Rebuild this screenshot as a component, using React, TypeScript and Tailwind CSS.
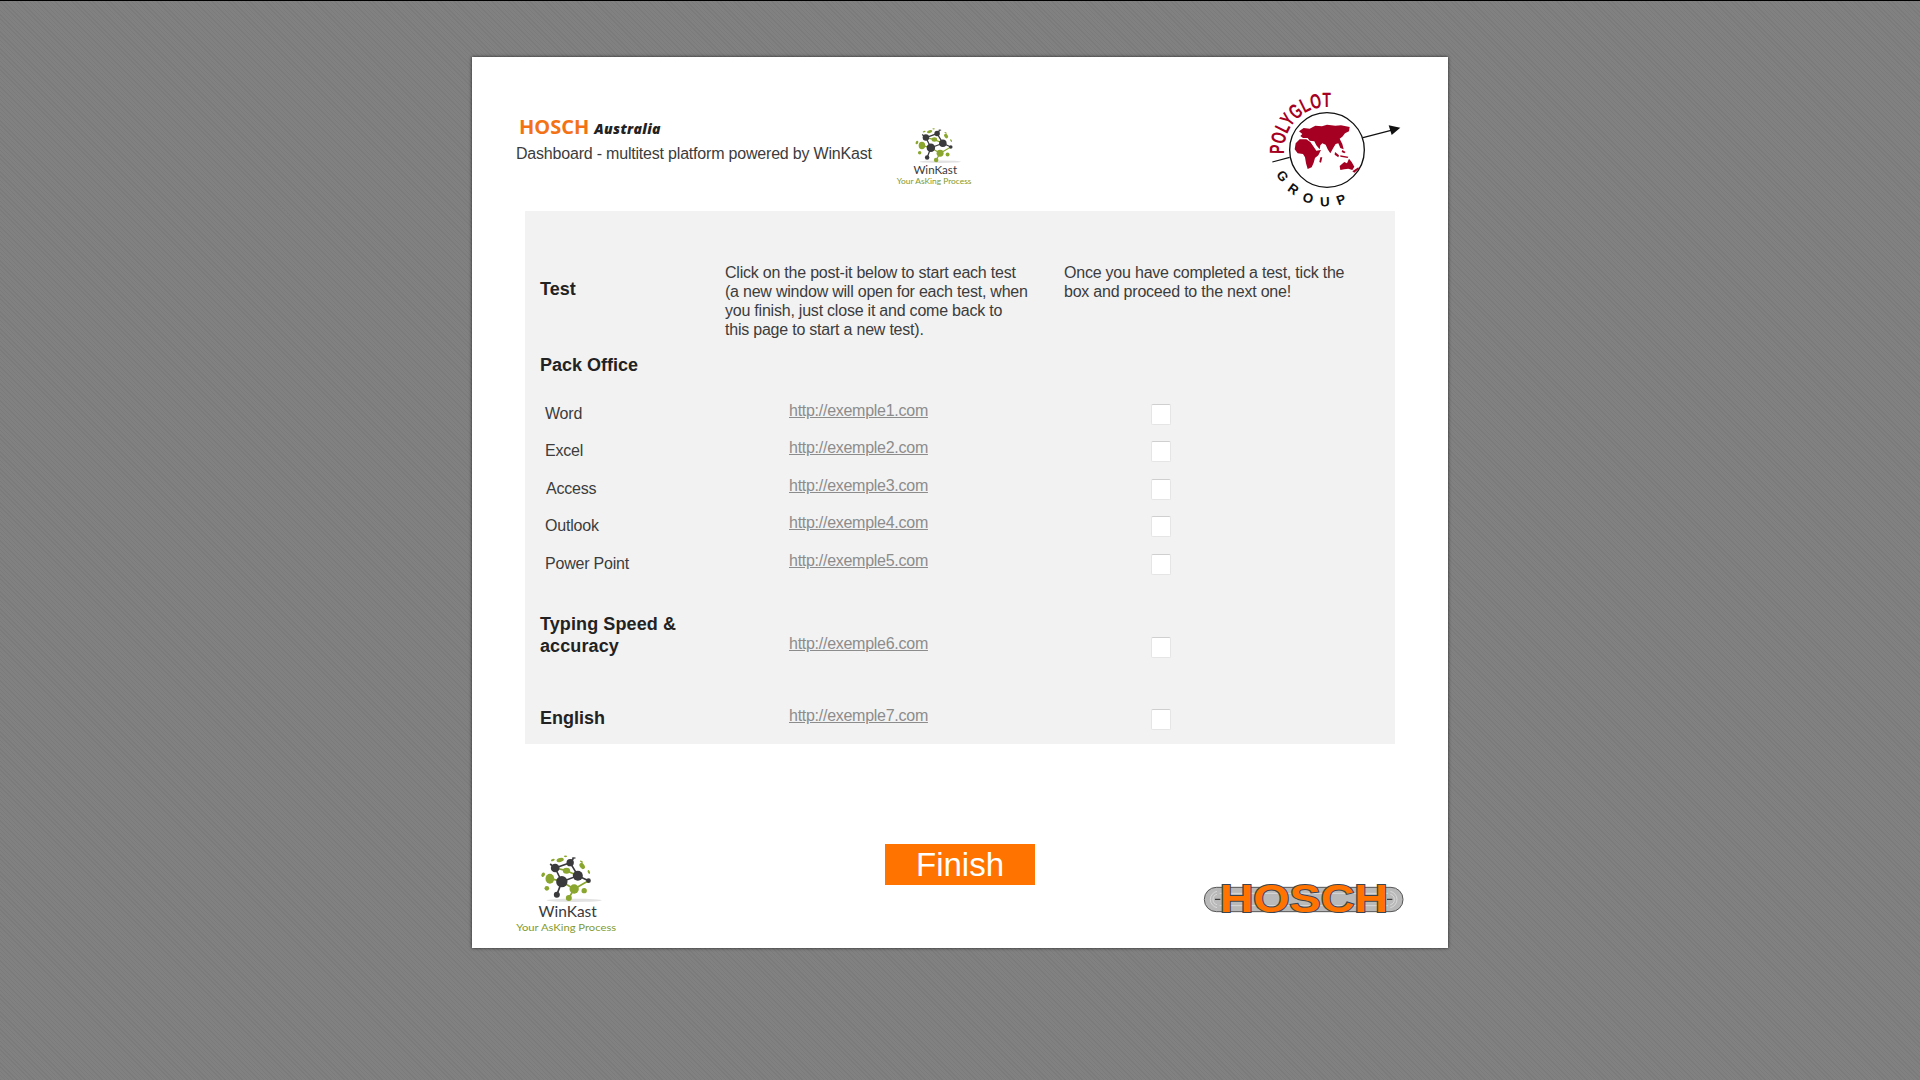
const ARIAL = 'font-["Liberation_Sans",Arial,sans-serif]';

const packOffice = [
  { name: 'Word', url: 'http://exemple1.com', indent: 'pl-[5px]' },
  { name: 'Excel', url: 'http://exemple2.com', indent: 'pl-[5px]' },
  { name: 'Access', url: 'http://exemple3.com', indent: 'pl-[6px]' },
  { name: 'Outlook', url: 'http://exemple4.com', indent: 'pl-[5px]' },
  { name: 'Power Point', url: 'http://exemple5.com', indent: 'pl-[5px]' },
];

function WinKastLogo({ className }: { className: string }) {
  return (
    <svg viewBox="45 70 305 240" className={className}>
      <ellipse cx="222" cy="209" rx="83" ry="5" fill="#e2e2e2" />
      <g stroke="#8aa62f" strokeWidth="5" fill="none">
        <path d="M150 143 L185 153 M199 120 L233 135 M222 175 L185 153 M222 175 L265 150 M206 202 L222 175 M199 120 L165 112" />
      </g>
      <g stroke="#3a3a3c" strokeWidth="5" fill="none">
        <path d="M185 153 L233 135 L210 96 L165 112 L185 153 L170 192 M233 135 L265 150 M210 96 L220 83 M165 112 L150 100" />
      </g>
      <g fill="#8aa62f">
        <ellipse cx="149" cy="144" rx="13" ry="15" />
        <ellipse cx="199" cy="120" rx="11" ry="9" />
        <circle cx="222" cy="175" r="14" />
        <circle cx="140" cy="173" r="7" />
        <circle cx="252" cy="180" r="8" />
        <circle cx="206" cy="202" r="9" />
        <ellipse cx="180" cy="88" rx="11" ry="6" transform="rotate(-15 180 88)" />
        <ellipse cx="129" cy="132" rx="5" ry="7" transform="rotate(30 129 132)" />
        <ellipse cx="246" cy="106" rx="7" ry="10" transform="rotate(-35 246 106)" />
        <ellipse cx="266" cy="124" rx="3" ry="6" transform="rotate(-25 266 124)" />
        <ellipse cx="158" cy="88" rx="6" ry="3" transform="rotate(-20 158 88)" />
        <ellipse cx="196" cy="77" rx="5" ry="2.5" />
        <ellipse cx="244" cy="93" rx="5" ry="2.5" transform="rotate(30 244 93)" />
      </g>
      <g fill="#3a3a3c">
        <circle cx="185" cy="153" r="17" />
        <circle cx="233" cy="135" r="15" />
        <circle cx="165" cy="112" r="13" />
        <circle cx="210" cy="96" r="11" />
        <circle cx="170" cy="192" r="9" />
        <circle cx="265" cy="150" r="7" />
        <ellipse cx="221" cy="82" rx="6" ry="2.5" />
      </g>
      <text x="115" y="260" textLength="175" lengthAdjust="spacingAndGlyphs" fontFamily="Lato, sans-serif" fontSize="44" fill="#3a3a3c">
        WinKast
      </text>
      <text x="48" y="300" textLength="300" lengthAdjust="spacingAndGlyphs" fontFamily="Lato, sans-serif" fontSize="30" fill="#7f9a2d">
        Your AsKing Process
      </text>
    </svg>
  );
}

function PolyglotLogo() {
  return (
    <svg viewBox="140 60 410 350" className="h-[116.67px] w-[136.67px] overflow-visible">
      <defs>
        <path id="polyglot-arc" d="M192 252 A129 129 0 0 1 352 115" />
        <path id="group-arc" d="M168 312 A168 168 0 0 0 400 388" />
      </defs>
      <path d="M156 276 L208 262 M428 203 L512 181" stroke="#111" strokeWidth="3.5" />
      <path d="M540 173 L505 166 L514 195 Z" fill="#111" />
      <circle cx="320" cy="240" r="112" fill="#fff" stroke="#111" strokeWidth="4" />
      <g fill="#a50021">
        <path d="M236 184 L250 174 L268 176 L285 167 L305 169 L320 164 L345 167 L362 166 L388 171 L386 184 L374 190 L366 200 L358 206 L366 222 L370 238 L360 234 L354 220 L346 222 L340 232 L330 250 L322 238 L316 224 L306 220 L300 226 L298 238 L288 226 L282 214 L268 212 L262 204 L248 204 L240 198 L246 192 Z" />
        <path d="M226 220 L238 208 L258 208 L270 216 L280 230 L288 242 L302 240 L294 256 L284 264 L280 278 L274 292 L262 297 L257 280 L254 262 L248 252 L232 250 L223 238 Z" />
        <path d="M358 288 L372 276 L380 280 L386 266 L394 276 L402 290 L396 300 L384 296 L372 298 L360 300 Z" />
        <path d="M300 262 L306 262 L302 278 L297 276 Z" />
        <path d="M344 246 L356 256 L354 262 L343 254 Z" />
        <path d="M360 256 L384 260 L382 264 L360 260 Z" />
        <path d="M366 240 L376 246 L372 250 L364 246 Z" />
        <path d="M396 304 L414 292 L416 296 L402 308 Z" />
      </g>
      <text fontFamily="Liberation Sans, sans-serif" fontWeight="700" fontSize="62" fill="#a50021">
        <textPath href="#polyglot-arc" textLength="226" lengthAdjust="spacingAndGlyphs">
          POLYGLOT
        </textPath>
      </text>
      <text fontFamily="Liberation Sans, sans-serif" fontWeight="700" fontSize="40" fill="#111">
        <textPath href="#group-arc" letterSpacing="26">
          GROUP
        </textPath>
      </text>
    </svg>
  );
}

function HoschLogo() {
  return (
    <svg viewBox="70 72 604 90" className="h-[30px] w-[201.33px] overflow-visible">
      <rect x="74" y="82" width="596" height="73" rx="36" fill="#b9b9b9" stroke="#555" strokeWidth="3" />
      <g fill="none" stroke="#e8e8e8" strokeWidth="2">
        <path d="M112 94 A25 25 0 0 0 112 143 M112 103 A16 16 0 0 0 112 134" />
        <path d="M632 94 A25 25 0 0 1 632 143 M632 103 A16 16 0 0 1 632 134" />
        <path d="M120 100 H625 M120 137 H625" />
      </g>
      <path d="M106 118 H122 M622 118 H638" stroke="#222" strokeWidth="3" />
      <text
        x="120"
        y="157"
        textLength="505"
        lengthAdjust="spacingAndGlyphs"
        fontFamily="Liberation Sans, sans-serif"
        fontWeight="700"
        fontSize="115"
        fill="#ff7300"
        stroke="#3c4650"
        strokeWidth="6"
        paintOrder="stroke"
      >
        HOSCH
      </text>
    </svg>
  );
}

function TickBox() {
  return (
    <input
      type="checkbox"
      className="block h-[21px] w-[20px] appearance-none rounded-[2px] border border-[#e5e5e5] border-t-[#cfcfcf] bg-white"
    />
  );
}

function TestLink({ url }: { url: string }) {
  return (
    <a href="#" className="text-[16px] leading-[18px] tracking-[-0.27px] text-[#8c8c8c] underline">
      {url}
    </a>
  );
}

export default function App() {
  return (
    <div className={`min-h-[1080px] border-t border-black bg-[#7f7f7f] bg-[repeating-linear-gradient(45deg,#7b7b7b_0_1px,#818181_1px_3px)] pt-[56px] ${ARIAL}`}>
      <div className="mx-auto flex h-[891px] w-[976px] flex-col bg-white shadow-[0_0_3px_#222222]">
        <header className="flex h-[154px] shrink-0 items-start pl-[44px] pr-[44px]">
          <div className="w-[380px] pt-[60px]">
            <div className="flex items-baseline gap-[5px] pl-[3px] font-['Open_Sans',sans-serif] leading-[20px]">
              <span className="text-[20px] font-bold text-[#f47216]">HOSCH</span>
              <span className="text-[14px] font-extrabold italic tracking-[0.3px] text-[#222222]">Australia</span>
            </div>
            <p className="mt-[5px] text-[16px] leading-[19px] tracking-[-0.2px] text-[#3c3c3c]">Dashboard - multitest platform powered by WinKast</p>
          </div>
          <WinKastLogo className="mt-[70px] h-[60px] w-[76px]" />
          <div className="ml-auto mt-[33px]">
            <PolyglotLogo />
          </div>
        </header>

        <section className="mx-[53px] h-[533px] shrink-0 bg-[#f2f2f2] pl-[15px] text-[#3c3c3c]">
          <div className="grid grid-cols-[185px_339px_1fr] pt-[52px] text-[16px] leading-[19px] tracking-[-0.22px]">
            <h2 className="pt-[15px] text-[18px] font-bold leading-[22px] tracking-normal text-[#222222]">Test</h2>
            <p>
              Click on the post-it below to start each test
              <br />
              (a new window will open for each test, when
              <br />
              you finish, just close it and come back to
              <br />
              this page to start a new test).
            </p>
            <p>
              Once you have completed a test, tick the
              <br />
              box and proceed to the next one!
            </p>
          </div>

          <h2 className="mt-[15px] h-[22px] text-[18px] font-bold leading-[22px] text-[#222222]">Pack Office</h2>

          <div className="mt-[19.5px]">
            {packOffice.map((row) => (
              <div key={row.name} className="grid h-[37.5px] grid-cols-[249px_362px_1fr]">
                <span className={`pt-[9px] text-[16px] leading-[18px] tracking-[-0.2px] ${row.indent}`}>{row.name}</span>
                <span className="pt-[3px]">
                  <TestLink url={row.url} />
                </span>
                <div className="pt-[8px]">
                  <TickBox />
                </div>
              </div>
            ))}
          </div>

          <div className="mt-[29.5px] grid grid-cols-[249px_362px_1fr]">
            <h2 className="text-[18px] font-bold leading-[22px] tracking-[0.1px] text-[#222222]">
              Typing Speed &amp;
              <br />
              accuracy
            </h2>
            <span className="pt-[19px]">
              <TestLink url="http://exemple6.com" />
            </span>
            <div className="pt-[24px]">
              <TickBox />
            </div>
          </div>

          <div className="mt-[47px] grid grid-cols-[249px_362px_1fr]">
            <h2 className="pt-[2px] text-[18px] font-bold leading-[22px] text-[#222222]">English</h2>
            <span className="-mt-[1px]">
              <TestLink url="http://exemple7.com" />
            </span>
            <div className="pt-[4px]">
              <TickBox />
            </div>
          </div>
        </section>

        <footer className="flex flex-1 items-start pl-[43px] pr-[44px]">
          <div className="mt-[110px] w-[370px]">
            <WinKastLogo className="h-[80px] w-[102px]" />
          </div>
          <button className="mt-[100px] h-[41px] w-[150px] bg-[#ff7300] text-[33px] leading-[41px] text-white">Finish</button>
          <div className="ml-auto mt-[140px]">
            <HoschLogo />
          </div>
        </footer>
      </div>
    </div>
  );
}
